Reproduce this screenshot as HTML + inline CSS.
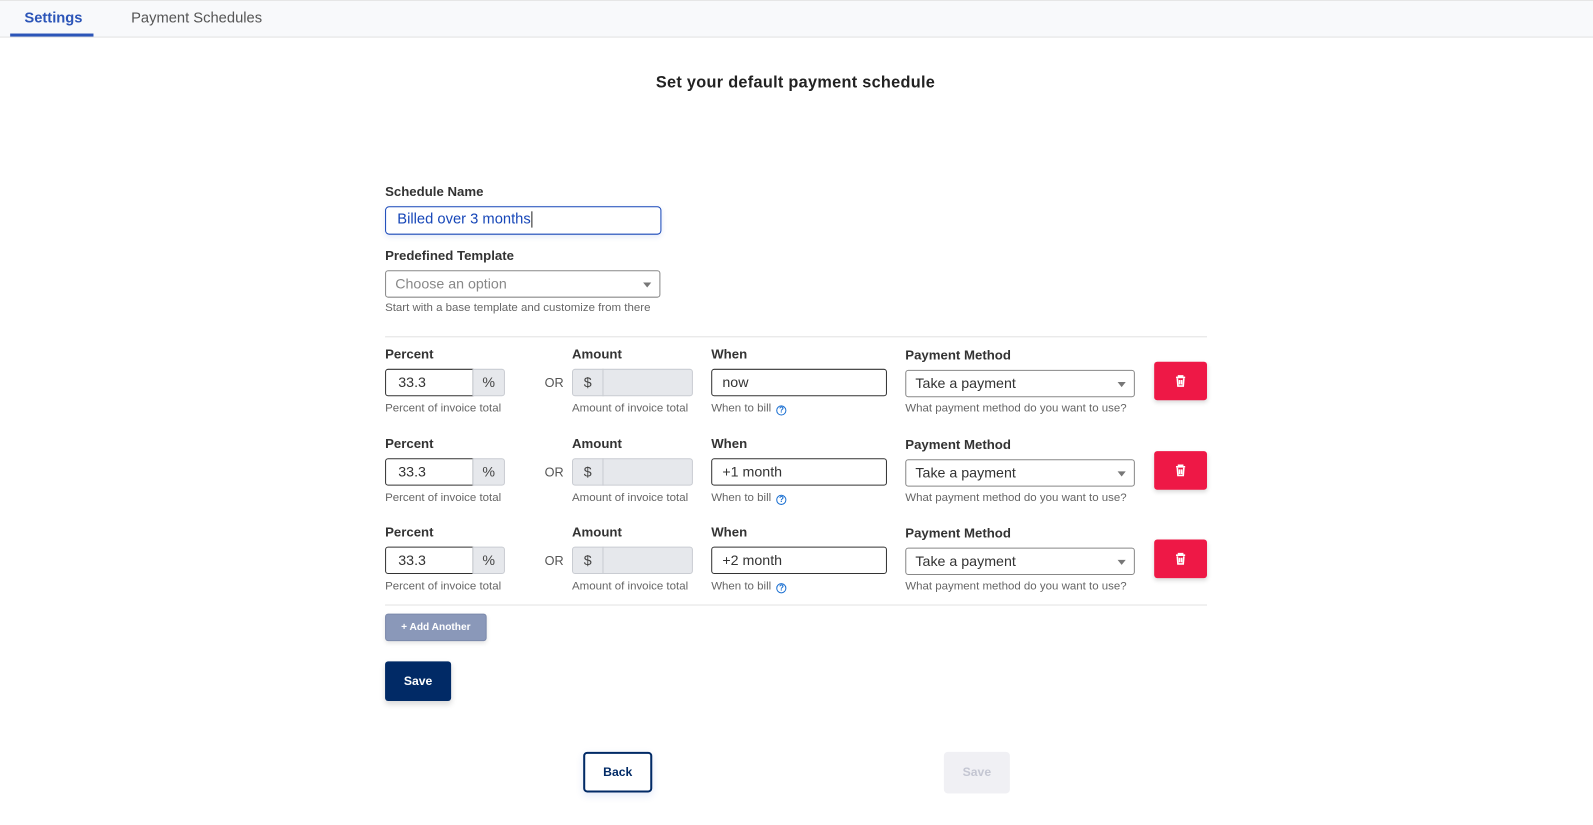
<!DOCTYPE html>
<html><head><meta charset="utf-8"><style>
*{box-sizing:border-box;margin:0;padding:0}
body{width:1593px;height:825px;background:#fff;font-family:"Liberation Sans",sans-serif;color:#333;position:relative;overflow:hidden}
#w{position:absolute;left:0;top:0;width:1568px;height:812px;transform:scale(1.016);transform-origin:0 0}
.a{position:absolute}
.nav{left:0;top:0;width:1568px;height:37px;background:#f8f9fb;border-top:1px solid #e6e6e6;border-bottom:1px solid #e2e2e2}
.lbl{font-size:13px;font-weight:bold;color:#333}
.help{font-size:11.3px;color:#666}
.inp{border:1px solid #333;border-radius:3px;height:27px;font-size:14px;line-height:25px;padding-left:12px;color:#333;background:#fff}
.add{background:#e6e8ec;border:1px solid #c9ccd2;font-size:14px;color:#444;text-align:center;line-height:25px;height:27px}
.sel{border:1px solid #888;border-radius:3px;height:27px;font-size:14px;line-height:25px;padding-left:9px;background:#fff}
.sel:after{content:"";position:absolute;right:8px;top:11px;border-left:4px solid transparent;border-right:4px solid transparent;border-top:5px solid #777}
.del{background:#ee1846;border-radius:3px;width:52px;height:38px;box-shadow:0 2px 4px rgba(0,0,0,.15)}
.q{display:inline-block;width:10px;height:10px;border:1.3px solid #1a6fd1;border-radius:50%;font-size:8px;line-height:8px;text-align:center;color:#1a6fd1;font-weight:bold;vertical-align:-1px;margin-left:2px}
.line{left:379px;width:809px;height:1px;background:#e2e2e2}
</style></head><body><div id="w">
<div class="a nav"></div>
<div class="a" style="left:24px;top:10px;font-size:14.5px;font-weight:bold;color:#2c55b8">Settings</div>
<div class="a" style="left:10px;top:33px;width:82px;height:3px;background:#2c55b8"></div>
<div class="a" style="left:129px;top:10px;font-size:14.5px;color:#555">Payment Schedules</div>
<div class="a" style="left:0;width:1566px;top:73px;text-align:center;font-size:16px;font-weight:bold;color:#222;letter-spacing:0.3px">Set your default payment schedule</div>

<div class="a lbl" style="left:379px;top:181px">Schedule Name</div>
<div class="a" style="left:379px;top:203px;width:272px;height:28px;border:1.5px solid #1646b8;border-radius:4px;font-size:14.5px;color:#1646b8;line-height:25px;padding-left:11px;box-shadow:0 2px 5px rgba(30,80,200,.12)">Billed over 3 months<span style="border-left:1px solid #222;margin-left:1px"></span></div>
<div class="a lbl" style="left:379px;top:244px">Predefined Template</div>
<div class="a sel" style="left:379px;top:266px;width:271px;color:#888">Choose an option</div>
<div class="a help" style="left:379px;top:297px">Start with a base template and customize from there</div>
<div class="a line" style="top:331px"></div>

<div id="rows"></div>
<script>
var rows=[[0,"now"],[88,"+1 month"],[175,"+2 month"]];var h="";
rows.forEach(function(r){var d=r[0];
h+='<div class="a lbl" style="left:379px;top:'+(341+d)+'px">Percent</div>'+
'<div class="a inp" style="left:379px;top:'+(363+d)+'px;width:87px;border-radius:3px 0 0 3px">33.3</div>'+
'<div class="a add" style="left:465px;top:'+(363+d)+'px;width:32px;border-radius:0 3px 3px 0">%</div>'+
'<div class="a help" style="left:379px;top:'+(396+d)+'px">Percent of invoice total</div>'+
'<div class="a" style="left:536px;top:'+(370+d)+'px;font-size:12.5px;color:#555">OR</div>'+
'<div class="a lbl" style="left:563px;top:'+(341+d)+'px">Amount</div>'+
'<div class="a add" style="left:563px;top:'+(363+d)+'px;width:31px;border-radius:3px 0 0 3px">$</div>'+
'<div class="a add" style="left:593px;top:'+(363+d)+'px;width:89px;border-radius:0 3px 3px 0"></div>'+
'<div class="a help" style="left:563px;top:'+(396+d)+'px">Amount of invoice total</div>'+
'<div class="a lbl" style="left:700px;top:'+(341+d)+'px">When</div>'+
'<div class="a inp" style="left:700px;top:'+(363+d)+'px;width:173px;padding-left:10px">'+r[1]+'</div>'+
'<div class="a help" style="left:700px;top:'+(396+d)+'px">When to bill <span class="q">?</span></div>'+
'<div class="a lbl" style="left:891px;top:'+(342+d)+'px">Payment Method</div>'+
'<div class="a sel" style="left:891px;top:'+(364+d)+'px;width:226px;color:#333">Take a payment</div>'+
'<div class="a help" style="left:891px;top:'+(396+d)+'px">What payment method do you want to use?</div>'+
'<div class="a del" style="left:1136px;top:'+(356+d)+'px"><svg width="52" height="38" viewBox="0 0 52 38"><g fill="none" stroke="#fff" stroke-width="1.6"><path d="M21.5 15.5h9M24 15.5v-1.5h4v1.5M22.8 16.5l.6 7.5h5.2l.6-7.5M25 18v4.5M27 18v4.5"/></g></svg></div>';});
document.getElementById("rows").outerHTML=h;
</script>
<div class="a line" style="top:595px"></div>
<div class="a" style="left:379px;top:604px;width:100px;height:27px;background:#8a98b9;border:1px solid #7a88aa;border-radius:3px;color:#fff;font-size:10px;font-weight:bold;text-align:center;line-height:25px;box-shadow:0 2px 4px rgba(0,0,0,.1)">+ Add Another</div>
<div class="a" style="left:379px;top:651px;width:65px;height:39px;background:#012a66;border-radius:3px;color:#fff;font-size:12px;font-weight:bold;text-align:center;line-height:39px;box-shadow:0 3px 6px rgba(0,0,0,.15)">Save</div>
<div class="a" style="left:574px;top:740px;width:68px;height:40px;border:2px solid #012a66;border-radius:4px;color:#012a66;font-size:12px;font-weight:bold;text-align:center;line-height:36px;box-shadow:0 3px 8px rgba(40,80,200,.12)">Back</div>
<div class="a" style="left:929px;top:740px;width:65px;height:41px;background:#f0f0f4;border-radius:4px;color:#c4c6d2;font-size:12px;font-weight:bold;text-align:center;line-height:41px">Save</div>
</div></body></html>
